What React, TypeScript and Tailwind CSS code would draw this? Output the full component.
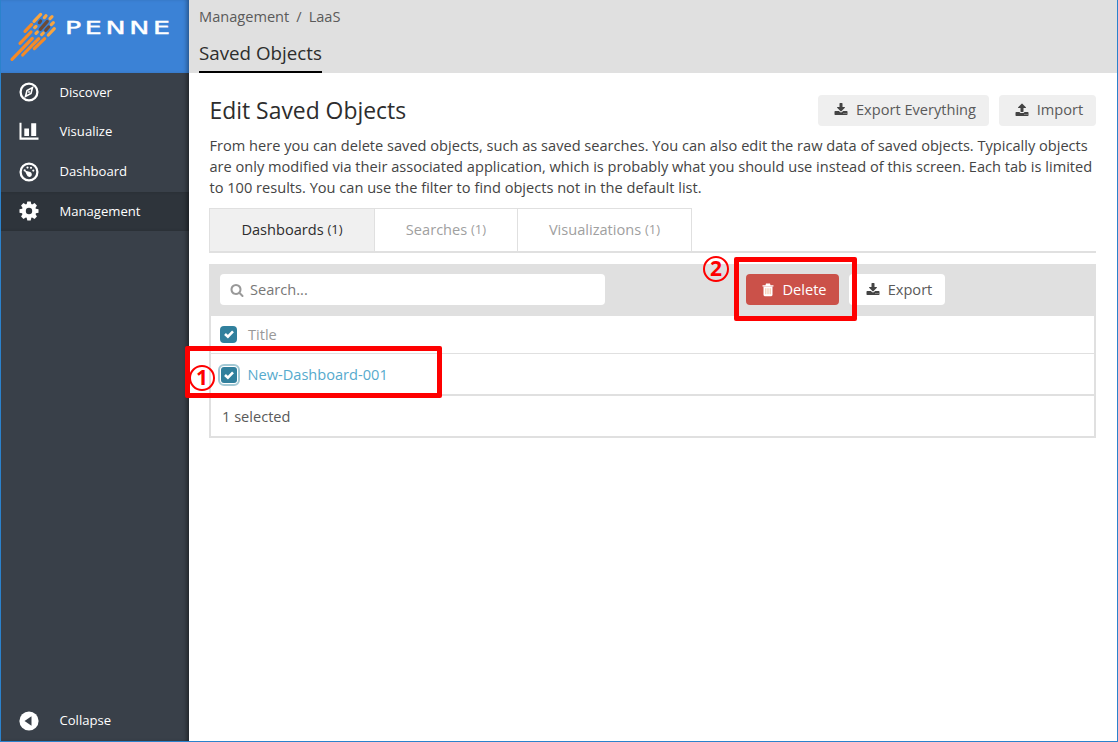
import React from 'react';

const DOWNLOAD =
  'M1344 1344q0-26-19-45t-45-19-45 19-19 45 19 45 45 19 45-19 19-45zm256 0q0-26-19-45t-45-19-45 19-19 45 19 45 45 19 45-19 19-45zm128-224v320q0 40-28 68t-68 28h-1472q-40 0-68-28t-28-68v-320q0-40 28-68t68-28h465l135 136q58 56 136 56t136-56l136-136h464q40 0 68 28t28 68zm-325-569q17 41-14 70l-448 448q-18 19-45 19t-45-19l-448-448q-31-29-14-70 17-39 59-39h256v-448q0-26 19-45t45-19h256q26 0 45 19t19 45v448h256q42 0 59 39z';
const UPLOAD =
  'M1344 1472q0-26-19-45t-45-19-45 19-19 45 19 45 45 19 45-19 19-45zm256 0q0-26-19-45t-45-19-45 19-19 45 19 45 45 19 45-19 19-45zm128-224v320q0 40-28 68t-68 28h-1472q-40 0-68-28t-28-68v-320q0-40 28-68t68-28h427q21 56 70.5 92t110.5 36h256q61 0 110.5-36t70.5-92h427q40 0 68 28t28 68zm-325-648q-17 40-59 40h-256v448q0 26-19 45t-45 19h-256q-26 0-45-19t-19-45v-448h-256q-42 0-59-40-17-39 14-69l448-448q18-19 45-19t45 19l448 448q31 30 14 69z';
const SEARCH =
  'M1216 832q0-185-131.5-316.5t-316.5-131.5-316.5 131.5-131.5 316.5 131.5 316.5 316.5 131.5 316.5-131.5 131.5-316.5zm512 832q0 52-38 90t-90 38q-54 0-90-38l-343-342q-179 124-399 124-143 0-273.5-55.5t-225-150-150-225-55.5-273.5 55.5-273.5 150-225 225-150 273.5-55.5 273.5 55.5 225 150 150 225 55.5 273.5q0 220-124 399l343 343q37 37 37 90z';

function Glyph({ d, className }: { d: string; className: string }) {
  return (
    <svg viewBox="0 0 1792 1792" fill="currentColor" className={className}>
      <path d={d} />
    </svg>
  );
}

function LogoMark() {
  return (
    <svg viewBox="15 30 156 156" className="h-[52px] w-[52px] shrink-0" fill="none" strokeWidth="9.500" strokeLinecap="round">
      <path
        stroke="#f9a540"
        d="M102 64L122 43M133 53L138 47M150 56L156 50M104 83L108 79M154 74L160 68M145 105L163 86M108 100L112 96M125 104L130 99"
      />
      <path stroke="#6b4a38" d="M118 68L122 63M121 88L142 64M137 91L146 81" />
      <path stroke="#f58a26" d="M75 94L95 73M60 130L93 96M36 178L97 115M68 165L116 116M103 146L134 116" />
    </svg>
  );
}

function CompassIcon() {
  return (
    <svg viewBox="0 0 20 20" className="h-5 w-5" fill="none" stroke="#fff">
      <circle cx="10" cy="10" r="8.400" strokeWidth="2.300" />
      <path d="M13.500 5.500L12 11.500L6.500 14.500L8 8.500Z" strokeWidth="1.600" />
      <circle cx="10" cy="10" r=".9" fill="#fff" stroke="none" />
    </svg>
  );
}

function ChartIcon() {
  return (
    <svg viewBox="0 0 20 20" className="h-5 w-5" fill="#fff">
      <path d="M.5 .8h2v14.700h17v2.200H.5zM5.300 6.500h4.700v7.500H5.300zM12.200 1.300h5v12.700h-5z" />
    </svg>
  );
}

function GaugeIcon() {
  return (
    <svg viewBox="0 0 20 20" className="h-5 w-5" fill="#fff">
      <circle cx="10" cy="10" r="8.400" fill="none" stroke="#fff" strokeWidth="2.300" />
      <circle cx="5.700" cy="8.400" r="1.100" />
      <circle cx="8.500" cy="5.600" r="1.100" />
      <circle cx="12" cy="5.800" r="1.100" />
      <circle cx="14.300" cy="8.600" r="1.100" />
      <path d="M5.600 8.600L11.300 10.100a2.500 2.500 0 1 1-3.300 3.200z" />
    </svg>
  );
}

function CogIcon() {
  return (
    <svg viewBox="0 0 20 20" className="h-5 w-5">
      <g fill="#fff">
        {[0, 45, 90, 135].map((a) => (
          <path key={a} d="M8.300 .5h3.400l.9 4v11l-.9 4H8.300l-.9-4v-11z" transform={`rotate(${a} 10 10)`} />
        ))}
        <circle cx="10" cy="10" r="7.200" />
      </g>
      <circle cx="10" cy="10" r="3.200" fill="#2e343b" />
    </svg>
  );
}

function CollapseIcon() {
  return (
    <svg viewBox="0 0 20 20" className="h-5 w-5">
      <circle cx="10" cy="10" r="9.600" fill="#fff" />
      <path d="M5.500 10L12.500 5.300v9.400z" fill="#394049" />
    </svg>
  );
}

function TrashIcon() {
  return (
    <svg viewBox="0 0 14 14" className="h-[14px] w-[14px]">
      <path d="M1.500 3.500v-1.300h3L5 .6h4l.5 1.600h3v1.300z" fill="#fff" />
      <path d="M2.500 3.500h9v8.300q0 1.400-1.200 1.400H3.700q-1.200 0-1.200-1.400z" fill="#fff" />
      <path d="M4.800 5.300v6M7 5.300v6M9.200 5.300v6" stroke="#f3c3a5" strokeWidth="1.100" />
    </svg>
  );
}

function NavItem({ icon, label, active }: { icon: React.ReactNode; label: string; active?: boolean }) {
  return (
    <div
      className={
        active
          ? 'flex h-[39.700px] items-center bg-[#2e343b] pl-[18px] text-[13.100px] text-white shadow-[inset_-4px_0_4px_-2px_rgba(0,0,0,0.450)]'
          : 'flex h-[39.700px] items-center pl-[18px] text-[13.100px] text-white'
      }
    >
      {icon}
      <span className="ml-[20.500px]">{label}</span>
    </div>
  );
}

function Check({ focused }: { focused?: boolean }) {
  return (
    <span
      className={
        focused
          ? 'flex h-4 w-4 items-center justify-center rounded-[3px] bg-[#31809d] ring-1 ring-white outline-2 outline-offset-1 outline-[#a3c9d5]'
          : 'mb-px flex h-[17px] w-[17px] items-center justify-center rounded-[4px] bg-[#31809d]'
      }
    >
      <svg viewBox="0 0 12 12" className="h-3 w-3" fill="none" stroke="#fff" strokeWidth="2.600">
        <path d="M2 6L4.900 8.700L10 3.400" />
      </svg>
    </span>
  );
}

function Tab({ label, className }: { label: string; className: string }) {
  return (
    <div className={`flex items-center justify-center border-r border-[#e0e0e0] pb-px ${className}`}>
      {label}&nbsp;<span className="text-[13px]">(1)</span>
    </div>
  );
}

function Marker({ children, className }: { children: string; className: string }) {
  return (
    <span
      className={`absolute flex h-[26px] w-[26px] items-center justify-center rounded-full border-2 border-[#fe0000] pb-[2px] font-['Noto_Sans'] text-[21px] leading-none font-bold text-[#fe0000] ${className}`}
    >
      {children}
    </span>
  );
}

export default function App() {
  return (
    <div className="flex h-[742px] w-[1118px] overflow-hidden border-r border-b border-l border-[#2b82cc] bg-white font-['Open_Sans',sans-serif] text-[14.600px] text-[#5a5a5a]">
      <aside className="flex w-[187.500px] shrink-0 flex-col bg-[#394049] shadow-[inset_-4px_0_4px_-2px_rgba(0,0,0,0.450)]">
        <div className="flex h-[72.500px] shrink-0 bg-[#3b82d6] pt-[10px] pl-[4px] shadow-[inset_-4px_0_4px_-2px_rgba(0,0,0,0.350)]">
          <LogoMark />
          <span className="mt-[8px] ml-[7.500px] w-[70px] origin-left scale-x-[1.580] font-['DejaVu_Sans'] text-[17px] leading-[20px] tracking-[2.300px] text-white [-webkit-text-stroke:0.400px_white]">
            PENNE
          </span>
        </div>
        <NavItem icon={<CompassIcon />} label="Discover" />
        <NavItem icon={<ChartIcon />} label="Visualize" />
        <NavItem icon={<GaugeIcon />} label="Dashboard" />
        <NavItem icon={<CogIcon />} label="Management" active />
        <div className="mt-auto">
          <NavItem icon={<CollapseIcon />} label="Collapse" />
        </div>
      </aside>

      <main className="min-w-0 flex-1">
        <header className="h-[73px] bg-[#e0e0e0] pl-[10.500px]">
          <div className="flex h-[33px] items-center gap-[7px]">
            <span>Management</span>
            <span>/</span>
            <span>LaaS</span>
          </div>
          <div className="flex h-10 w-[123px] items-center border-b-2 border-black pt-[2px] text-[18.750px] whitespace-nowrap text-[#2d2d2d]">
            Saved Objects
          </div>
        </header>

        <section className="pr-[21px] pl-[20.500px]">
          <div className="flex items-center pt-[21px]">
            <h1 className="flex-1 pt-px pl-[0.500px] text-[22.900px] leading-[31px] text-[#2d2d2d]">Edit Saved Objects</h1>
            <button className="flex h-[31px] w-[171px] items-center justify-center gap-[8px] rounded bg-[#efefef] pl-[3px]">
              <Glyph d={DOWNLOAD} className="h-[14px] w-[14px] text-[#444]" />
              Export Everything
            </button>
            <button className="ml-[10px] flex h-[31px] w-[97px] items-center justify-center gap-[8px] rounded bg-[#efefef] pl-[3px]">
              <Glyph d={UPLOAD} className="h-[14px] w-[14px] text-[#444]" />
              Import
            </button>
          </div>

          <p className="mt-[9px] pl-[0.500px] leading-[21px] whitespace-nowrap text-[#444]">
            From here you can delete saved objects, such as saved searches. You can also edit the raw data of saved objects. Typically objects
            <br />
            are only modified via their associated application, which is probably what you should use instead of this screen. Each tab is limited
            <br />
            to 100 results. You can use the filter to find objects not in the default list.
          </p>

          <div className="mt-[10px] flex h-[45px] border-b-2 border-[#e0e0e0] text-[#a0a0a0]">
            <div className="flex border-t border-l border-[#e0e0e0]">
              <Tab label="Dashboards" className="w-[165px] bg-[#f0f0f0] text-[#2d2d2d]" />
              <Tab label="Searches" className="w-[143px]" />
              <Tab label="Visualizations" className="w-[174px]" />
            </div>
          </div>

          <div className="relative mt-[11px] flex h-[52px] bg-[#e0e0e0] pt-[10px] pl-[11px]">
            <div className="flex h-[31px] w-[385px] items-center gap-[6px] rounded bg-white pl-[10px] text-[#777]">
              <Glyph d={SEARCH} className="h-[14px] w-[14px] text-[#999]" />
              Search...
            </div>
            <button className="ml-[141px] flex h-[31px] w-[93px] items-center justify-center gap-[7px] rounded bg-[#cb5149] pl-[3px] text-white">
              <TrashIcon />
              Delete
            </button>
            <button className="ml-[10px] flex h-[31px] w-[96px] items-center justify-center gap-[8px] rounded bg-white pl-[4px]">
              <Glyph d={DOWNLOAD} className="h-[14px] w-[14px] text-[#444]" />
              Export
            </button>
            <div className="absolute top-[-7px] left-[525px] h-[64px] w-[123px] rounded-[2px] border-[5px] border-[#fe0000]" />
            <Marker className="top-[-8px] left-[494px]">2</Marker>
          </div>

          <div className="border-r-2 border-b-2 border-l-2 border-[#e0e0e0]">
            <div className="flex h-[38px] items-center gap-[11px] border-b border-[#e0e0e0] pl-[9px] text-[#999]">
              <Check />
              Title
            </div>
            <div className="relative flex h-[42px] items-center gap-[11px] border-b-2 border-[#e0e0e0] pt-[2px] pl-[9.500px] text-[#56aacd]">
              <Check focused />
              New-Dashboard-001
              <div className="absolute top-[-8px] left-[-26px] h-[52px] w-[257px] rounded-[2px] border-[5px] border-[#fe0000]" />
              <Marker className="top-[11px] left-[-22px]">1</Marker>
            </div>
            <div className="flex h-[40px] items-center pt-[2px] pl-[11px]">1 selected</div>
          </div>
        </section>
      </main>
    </div>
  );
}
